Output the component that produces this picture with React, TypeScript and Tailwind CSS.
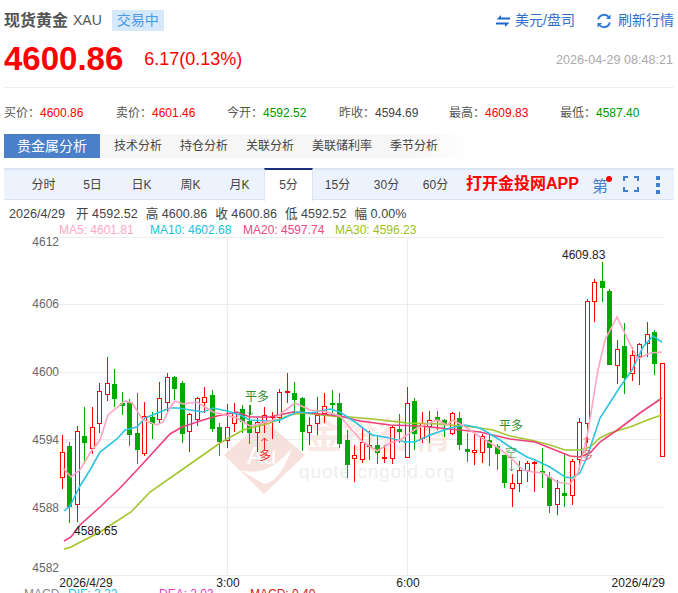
import React from "react";

type C = [number, number, number, number, 0 | 1];
const candles: C[] = [
  [435,452,477,489,1],[442,446,507,523,0],[426,431,504,522,1],[407,436,443,462,0],[407,427,448,454,1],
  [383,391,423,433,1],[357,383,394,401,1],[369,384,399,407,0],[392,403,406,415,0],[399,402,435,446,0],
  [393,433,450,464,0],[402,416,453,456,1],[412,417,424,439,0],[382,398,419,423,1],[373,377,402,413,1],
  [376,377,389,400,0],[381,383,434,443,0],[413,414,431,452,1],[397,398,419,426,1],[387,397,402,413,1],
  [390,395,429,432,0],[423,427,442,456,0],[404,427,440,448,1],[403,412,423,432,1],[405,409,422,433,0],
  [405,421,433,444,0],[418,422,432,452,1],[407,415,422,433,1],[412,416,417,439,1],[389,392,417,423,1],
  [373,391,392,403,1],[382,393,400,412,0],[397,398,432,451,0],[417,425,432,445,1],[397,415,423,435,1],
  [393,406,413,423,1],[390,403,405,415,0],[393,403,444,448,0],[430,440,465,478,0],[445,455,458,482,1],
  [428,442,459,463,1],[431,445,446,460,1],[436,445,453,464,0],[445,457,458,463,1],[426,427,458,464,1],
  [414,429,432,443,0],[387,403,457,457,1],[398,401,434,450,0],[412,423,438,443,1],[411,420,426,443,1],
  [411,417,420,430,0],[419,420,425,437,0],[412,413,433,435,1],[412,418,445,450,0],[433,449,452,462,0],
  [433,450,452,465,1],[434,436,452,463,1],[435,440,448,466,0],[444,446,454,470,0],[455,455,483,488,0],
  [474,483,488,507,1],[461,470,483,492,1],[461,463,470,482,1],[461,462,463,492,1],[448,471,472,488,0],
  [472,477,506,513,0],[480,488,504,515,1],[453,493,496,507,0],[459,461,495,505,1],[418,422,459,470,1],
  [299,301,423,443,1],[279,282,301,322,1],[262,281,288,302,0],[289,291,365,365,0],[340,349,365,384,1],
  [323,346,378,394,0],[347,355,373,381,1],[343,344,356,385,1],[322,334,343,357,1],[330,332,364,375,0],
  [363,363,456,456,1],
];

const ma30 = "64,549 71,547 100,532 131,512 150,492 183,469 203,455 220,443 243,430 270,423 290,415 303,413 340,417 350,417 373,419 407,423 440,424 473,427 493,430 510,436 535,441 550,445 565,450 580,450 590,447 600,438 610,433 630,427 650,419 662,415";
const ma20 = "64,541 71,537 80,525 100,507 120,488 137,470 170,434 182,427 203,420 217,416 237,412 250,417 270,417 293,412 310,413 340,416 360,421 390,425 420,426 450,429 480,432 510,439 535,442 550,448 570,456 580,457 590,453 600,442 620,428 640,413 662,398";
const ma10 = "64,511 70,506 80,486 90,470 100,452 117,439 125,430 137,427 145,418 170,408 178,408 203,412 213,408 227,411 240,415 250,420 270,421 280,420 297,412 310,413 330,409 340,412 355,422 372,435 390,438 405,442 415,442 430,435 450,428 465,425 480,428 500,440 510,447 527,457 535,460 550,467 565,477 572,478 580,473 587,457 600,418 620,387 632,370 643,347 653,336 662,342";
const ma5 = "63,468 71,477 80,470 90,453 100,440 108,415 125,401 132,403 143,420 157,425 163,422 170,408 175,401 183,404 197,402 213,412 225,415 237,418 250,426 263,423 273,420 283,412 295,403 310,410 327,412 340,416 350,428 363,442 377,451 390,443 400,440 417,428 437,420 447,425 453,420 467,428 480,437 497,447 510,457 523,470 533,472 543,473 557,482 570,484 578,473 587,437 598,370 605,340 617,317 633,350 638,359 650,353 662,352";

const tabs = ["分时", "5日", "日K", "周K", "月K", "5分", "15分", "30分", "60分"];
const analysis = ["技术分析", "持仓分析", "关联分析", "美联储利率", "季节分析"];
const stats: [string, string, string][] = [
  ["买价：", "4600.86", "text-[#ff0000]"],
  ["卖价：", "4601.46", "text-[#ff0000]"],
  ["今开：", "4592.52", "text-[#009900]"],
  ["昨收：", "4594.69", "text-[#444444]"],
  ["最高：", "4609.83", "text-[#ff0000]"],
  ["最低：", "4587.40", "text-[#009900]"],
];
const yLabels: [string, number][] = [["4612", 246], ["4606", 308], ["4600", 376], ["4594", 444], ["4588", 512], ["4582", 572]];

function Chart() {
  return (
    <svg width={678} height={356} viewBox="0 237 678 356" className="block">
      {[237.5, 304.5, 372.5, 439.5, 507.5, 575.5].map((y) => (
        <line key={y} x1={59} x2={665} y1={y} y2={y} stroke="#ececec" />
      ))}
      {[227.5, 407.5].map((x) => (
        <line key={x} x1={x} x2={x} y1={237} y2={575} stroke="#ececec" />
      ))}
      <g opacity={0.85}>
        <path d="M264 420 L305 455 L264 494 L224 455 Z" fill="#f6dcd6" />
        <path d="M240 470 Q268 478 292 448 Q280 482 264 484 Z" fill="#ffffff" />
        <text x={247} y={464} fontSize={24} fill="#ffffff">Au</text>
        <text x={306} y={448} fontSize={36} fontWeight={700} fill="#f9e7e2">金投行情</text>
        <text x={299} y={478} fontSize={19} fill="#ececec" letterSpacing={0.9}>quote.cngold.org</text>
      </g>
      {candles.map(([h, t, b, l, red], i) => {
        const x = Math.floor(62 + 7.5 * i) + 0.5;
        const color = red ? "#ff0000" : "#00a800";
        return (
          <g key={i}>
            <line x1={x} x2={x} y1={h} y2={l} stroke={color} />
            {b - t < 2 ? (
              <rect x={x - 2.5} y={t} width={5} height={2} fill={color} />
            ) : red ? (
              <rect x={x - 2} y={t + 0.5} width={4} height={b - t} fill="#ffffff" stroke={color} />
            ) : (
              <rect x={x - 2.5} y={t} width={5} height={b - t} fill={color} />
            )}
          </g>
        );
      })}
      <polyline points={ma30} fill="none" stroke="#a3c52e" strokeWidth={1.6} />
      <polyline points={ma20} fill="none" stroke="#f0407a" strokeWidth={1.6} />
      <polyline points={ma10} fill="none" stroke="#2cc4de" strokeWidth={1.6} />
      <polyline points={ma5} fill="none" stroke="#ffa6c2" strokeWidth={1.6} />
      <g fontSize={12}>
        {yLabels.map(([t, y]) => (
          <text key={t} x={59} y={y} textAnchor="end" fill="#666666">{t}</text>
        ))}
        <text x={86} y={587} textAnchor="middle" fill="#222222">2026/4/29</text>
        <text x={228} y={587} textAnchor="middle" fill="#222222">3:00</text>
        <text x={408} y={587} textAnchor="middle" fill="#222222">6:00</text>
        <text x={665} y={587} textAnchor="end" fill="#222222">2026/4/29</text>
        <text x={562} y={259} fill="#222222">4609.83</text>
        <text x={74} y={535} fill="#222222">4586.65</text>
        <text x={245} y={401} fill="#2e8b2e">平多</text>
        <text x={499} y={430} fill="#2e8b2e">平多</text>
        <text x={505} y={457} fill="#3f9f3f" opacity={0.8}>空</text>
        <text x={259} y={460} fill="#f02020">多</text>
        <text x={581} y={460} fill="#f05050" opacity={0.8}>多</text>
        <text x={24} y={598} fill="#888888">MACD</text>
        <text x={68} y={598} fill="#22c0dc">DIF: 2.22</text>
        <text x={159} y={598} fill="#e040c0">DEA: 2.03</text>
        <text x={250} y={598} fill="#cc2020">MACD: 0.40</text>
      </g>
      <path d="M250.5 405V415M248 412.5L250.5 415L253 412.5" stroke="#2e8b2e" fill="none" />
      <path d="M264.5 438V449M261.5 441L264.5 438L267.5 441" stroke="#f02020" fill="none" />
      <path d="M511.5 460V471M509 468.5L511.5 471L514 468.5" stroke="#2e8b2e" fill="none" opacity={0.7} />
      <path d="M586.5 437V447M583.5 440L586.5 437L589.5 440" stroke="#f05050" fill="none" opacity={0.8} />
    </svg>
  );
}

export default function App() {
  return (
    <div className="w-[678px] h-[593px] overflow-hidden bg-white font-['Liberation_Sans','Noto_Sans_CJK_SC',sans-serif] text-[12px] text-[#444444]">
      <div className="px-1">
        <div className="flex items-center justify-between h-[21px] mt-[10px]">
          <div className="flex items-center">
            <span className="text-[16px] font-bold text-[#555555]">现货黄金</span>
            <span className="text-[14px] text-[#555555] ml-[5px]">XAU</span>
            <span className="ml-[10px] h-[21px] w-[52px] leading-[21px] text-center bg-[#d5e9fb] text-[14px] text-[#4a9ae8]">交易中</span>
          </div>
          <div className="flex items-center text-[14px] text-[#2f6fd0]">
            <svg width={14} height={12} viewBox="0 0 14 12" className="mr-[5px]" fill="#1f66cc">
              <path d="M5 0V2.5H14V4.5H0.5Z" />
              <path d="M9 12V9.5H0V7.5H13.5Z" />
            </svg>
            <span>美元/盘司</span>
            <svg width={16} height={16} viewBox="0 0 16 16" className="ml-[21px] mr-[6px]" fill="none" stroke="#2f7ad6" strokeWidth={2}>
              <path d="M2.2 6.5A6 6 0 0 1 13 4.5" />
              <path d="M13.8 9.5A6 6 0 0 1 3 11.5" />
              <path d="M14.5 1.5V6H10Z" fill="#2f7ad6" stroke="none" />
              <path d="M1.5 14.5V10H6Z" fill="#2f7ad6" stroke="none" />
            </svg>
            <span>刷新行情</span>
          </div>
        </div>
        <div className="flex items-center h-[36px] mt-[10px]">
          <span className="text-[33px] leading-[36px] font-bold text-[#ff0000]">4600.86</span>
          <span className="text-[18px] text-[#ff0000] ml-[21px]">6.17(0.13%)</span>
          <span className="ml-auto mt-[3px] mr-px text-[12.6px] text-[#aaaaaa]">2026-04-29 08:48:21</span>
        </div>
        <div className="h-px bg-[#eeeeee] mt-[10px]" />
        <div className="grid grid-cols-[112px_111px_112px_110px_111px_1fr] h-[14px] leading-[14px] mt-[18px]">
          {stats.map(([k, v, c]) => (
            <div key={k} className="whitespace-nowrap">
              <span className="text-[#555555]">{k}</span>
              <span className={c}>{v}</span>
            </div>
          ))}
        </div>
        <div className="flex items-center h-[24px] mt-[14px] bg-gradient-to-r from-[#f6f6f6] from-60% to-white to-[70%]">
          <div className="w-[96px] h-full leading-[24px] text-center bg-[#4a7fc9] text-white text-[14px]">贵金属分析</div>
          <div className="flex gap-[18px] ml-[14px] text-[#444444]">
            {analysis.map((a) => <span key={a}>{a}</span>)}
          </div>
        </div>
        <div className="flex items-stretch h-[32px] mt-[10px] pl-[15px] bg-[#edf3fc] border-t-2 border-b border-[#dce5f3]">
          {tabs.map((t) => (
            <div
              key={t}
              className={
                t === "5分"
                  ? "w-[49px] text-center leading-[30px] bg-white border-t-2 border-[#1a2f80] border-x border-x-[#dce5f3] -mt-[2px] -mb-px h-[33px] box-border"
                  : "w-[49px] text-center leading-[30px]"
              }
            >
              {t}
            </div>
          ))}
          <span className="ml-[6px] text-[16px] leading-[28px] font-bold text-[#ff0000] whitespace-nowrap">打开金投网APP</span>
          <div className="relative ml-[13px] text-[16px] leading-[34px] text-[#4a7fc9]">
            第
            <span className="absolute right-[-4px] top-[6px] w-[6px] h-[6px] rounded-full bg-[#ff0000]" />
          </div>
          <svg width={16} height={16} viewBox="0 0 16 16" fill="none" stroke="#3f7fd0" strokeWidth={2} className="ml-[15px] mt-[6px]">
            <path d="M1 5V1H5M11 1H15V5M15 11V15H11M5 15H1V11" />
          </svg>
          <div className="flex flex-col gap-[3px] ml-[17px] mt-[6px]">
            <span className="w-[4px] h-[4px] bg-[#3f7fd0]" />
            <span className="w-[4px] h-[4px] bg-[#3f7fd0]" />
            <span className="w-[4px] h-[4px] bg-[#3f7fd0]" />
          </div>
        </div>
        <div className="flex gap-[8px] ml-[5px] mt-[7px] h-[15px] leading-[15px] text-[12.6px] text-[#444444] whitespace-nowrap">
          <span className="mr-[3px]">2026/4/29</span>
          <span>开 4592.52</span>
          <span>高 4600.86</span>
          <span>收 4600.86</span>
          <span>低 4592.52</span>
          <span>幅 0.00%</span>
        </div>
        <div className="flex ml-[55px] mt-[1px] h-[14px] leading-[14px] whitespace-nowrap">
          <span className="text-[#ffa6c2] w-[91px]">MA5: 4601.81</span>
          <span className="text-[#22c0dc] w-[93px]">MA10: 4602.68</span>
          <span className="text-[#f0487c] w-[92px]">MA20: 4597.74</span>
          <span className="text-[#9cc21a]">MA30: 4596.23</span>
        </div>
      </div>
      <Chart />
    </div>
  );
}
